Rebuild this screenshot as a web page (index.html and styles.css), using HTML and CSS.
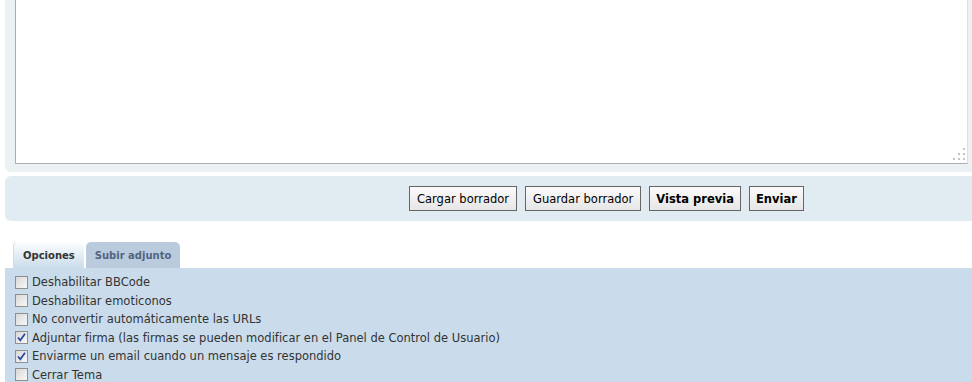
FILE: index.html
```html
<!DOCTYPE html>
<html lang="es">
<head>
    <meta charset="UTF-8">
    <title>Publicar mensaje</title>
    <link rel="stylesheet" href="styles.css">
</head>
<body>

    <div class="panel editor">
        <div class="editor-box">
            <textarea class="message" name="message"></textarea>
            <svg class="grip" width="12" height="12" viewBox="0 0 12 12">
                <rect x="10" y="0" width="2" height="2" />
                <rect x="5" y="5" width="2" height="2" />
                <rect x="10" y="5" width="2" height="2" />
                <rect x="0" y="10" width="2" height="2" />
                <rect x="5" y="10" width="2" height="2" />
                <rect x="10" y="10" width="2" height="2" />
            </svg>
        </div>
    </div>

    <div class="panel buttons">
        <button class="btn">Cargar borrador</button>
        <button class="btn">Guardar borrador</button>
        <button class="btn strong">Vista previa</button>
        <button class="btn strong">Enviar</button>
    </div>

    <div class="tabs">
        <span class="tab active">Opciones</span>
        <span class="tab">Subir adjunto</span>
    </div>

    <div class="options">
        <label class="option"><span class="check"></span>Deshabilitar BBCode</label>
        <label class="option"><span class="check"></span>Deshabilitar emoticonos</label>
        <label class="option"><span class="check"></span>No convertir automáticamente las URLs</label>
        <label class="option"><span class="check"><svg width="11" height="11" viewBox="0 0 11 11"><path d="M2 5.5 L4.3 8.3 L9 1.8" /></svg></span>Adjuntar firma (las firmas se pueden modificar en el Panel de Control de Usuario)</label>
        <label class="option"><span class="check"><svg width="11" height="11" viewBox="0 0 11 11"><path d="M2 5.5 L4.3 8.3 L9 1.8" /></svg></span>Enviarme un email cuando un mensaje es respondido</label>
        <label class="option"><span class="check"></span>Cerrar Tema</label>
    </div>

</body>
</html>
```

FILE: styles.css
```css
body {
    margin: 0;
    padding-left: 5px;
    font-family: "DejaVu Sans", Verdana, sans-serif;
    font-size: 11.5px;
    color: #333;
    background-color: #fff;
    overflow: hidden;
}

.panel {
    border-radius: 0 0 6px 6px;
    margin-right: -10px;
}

.editor {
    background-color: #ecf1f3;
    margin-top: -30px;
    padding: 0 14px 8px 10px;
}

.editor-box {
    position: relative;
}

.message {
    display: block;
    box-sizing: border-box;
    width: 100%;
    height: 194px;
    margin: 0;
    border: 1px solid #abadb3;
    border-right-color: #dbdfe6;
    background-color: #fff;
    resize: none;
}

.grip {
    position: absolute;
    right: 3px;
    bottom: 4px;
    fill: #c4c4c4;
}

.buttons {
    background-color: #e1ebf2;
    margin-top: 4px;
    border-radius: 6px;
    height: 45px;
    box-sizing: border-box;
    display: flex;
    align-items: center;
    gap: 8px;
    padding-left: 404px;
}

.btn {
    font-family: "DejaVu Sans", Verdana, sans-serif;
    font-size: 11.5px;
    color: #000;
    height: 25px;
    padding: 0 7px;
    border: 1px solid #666;
    background: linear-gradient(#fbfbfb, #e6e6e6);
    cursor: pointer;
}

.btn.strong {
    font-weight: bold;
    padding: 0 6px;
}

.tabs {
    display: flex;
    align-items: flex-end;
    gap: 2px;
    margin-top: 20px;
    padding-left: 8px;
    height: 27px;
}

.tab {
    display: flex;
    align-items: center;
    justify-content: center;
    box-sizing: border-box;
    height: 26px;
    padding: 1px 9px 0;
    font-size: 10px;
    font-weight: bold;
    color: #536482;
    background-color: #b9cbdc;
    border-radius: 5px 5px 0 0;
}

.tab.active {
    height: 27px;
    color: #333;
    background: linear-gradient(#ffffff, #cadceb);
    border-left: 1px solid #d4dde6;
}

.options {
    background-color: #cadceb;
    margin-right: -10px;
    padding: 5px 10px 10px;
    height: 99px;
}

.option {
    display: flex;
    align-items: center;
    height: 18.5px;
}

.check {
    box-sizing: border-box;
    width: 13px;
    height: 13px;
    margin-right: 4px;
    border: 1px solid #8f8f8f;
    background: linear-gradient(135deg, #d8d8d8, #f8f8f8);
    display: flex;
    align-items: center;
    justify-content: center;
}

.check svg {
    fill: none;
    stroke: #2c4ba3;
    stroke-width: 1.8;
}
```
